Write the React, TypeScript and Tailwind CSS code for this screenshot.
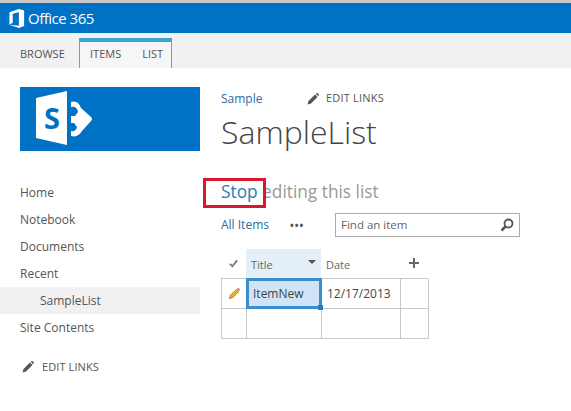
function Pencil({ className }: { className?: string }) {
  return (
    <svg viewBox="0 0 12 12" className={className} fill="currentColor">
      <path d="M0.5 11.5 L1.5 8 L8 1.5 L10.5 4 L4 10.5 Z" />
      <path d="M8.8 0.8 L9.8 0 Q10.2 -0.2 10.6 0.2 L11.8 1.4 Q12.2 1.8 11.8 2.2 L11 3.3 Z" />
    </svg>
  );
}

function SharePointLogo() {
  return (
    <svg viewBox="0 0 56 56" className="w-[56px] h-[56px]">
      <path d="M0 7 L31 0 L31 54 L0 47 Z" fill="#fff" />
      <path d="M35 11 Q42 9 45 17 L55 26 Q57 28 55 30 L46 40 Q42 47 35 45 L35 40 Q40 41 41 36 L38 32 L35 32 L35 25 L39 25 L42 21 Q41 15 35 16 Z" fill="#fff" />
      <text x="8" y="38" fontSize="29" fontWeight="700" fill="#0072c6" fontFamily="Open Sans, sans-serif">S</text>
    </svg>
  );
}

const navItems = ['Home', 'Notebook', 'Documents', 'Recent'];

export default function App() {
  return (
    <div className="relative w-[571px] h-[411px] overflow-hidden bg-white text-[#444] font-['Open_Sans','Noto_Sans',sans-serif]">
      <div className="h-[3px] bg-[#c9c9c9]" />
      <div className="h-[30px] bg-[#0072c6] flex items-center pl-[9px] gap-[3px] text-white">
        <svg viewBox="0 0 16 20" className="w-[16px] h-[19px]" fill="#fff">
          <path d="M0 3.5 L10 0 L15.5 1.5 L15.5 18 L10 20 L0 16.5 L10 17.5 L10 3.5 L3.5 5 L3.5 14.5 L0 16.5 Z" />
        </svg>
        <span className="text-[15px] tracking-[-0.5px]">Office 365</span>
      </div>
      <div className="h-[35px] bg-[#f1f1f1] flex items-end pl-[10px] text-[11px] text-[#555]">
        <div className="h-[27px] w-[69px] flex items-center pl-[10px]">BROWSE</div>
        <div className="h-[30px] w-[93px] border-x border-[#5fa8c4] border-t-[4px] border-t-[#39a5cb] bg-[#f6f6f6] flex items-center gap-[21px] pl-[10px] pb-[1px]">
          <span>ITEMS</span>
          <span>LIST</span>
        </div>
      </div>
      <div className="flex">
        <div className="w-[200px] shrink-0">
          <div className="ml-[20px] mt-[19px] h-[64px] bg-[#0072c6] flex items-center pl-[16px]">
            <SharePointLogo />
          </div>
          <div className="mt-[28px] text-[12px] text-[#555]">
            {navItems.map((item) => (
              <div key={item} className="h-[27px] flex items-center pl-[20px]">{item}</div>
            ))}
            <div className="h-[27px] flex items-center pl-[40px] bg-[#f1f1f1]">SampleList</div>
            <div className="h-[27px] flex items-center pl-[20px]">Site Contents</div>
          </div>
          <div className="mt-[18px] ml-[22px] flex items-center gap-[8px] text-[11px] tracking-[0.1px] text-[#555]">
            <Pencil className="w-[12px] h-[12px] text-[#555]" />
            <span>EDIT LINKS</span>
          </div>
        </div>
        <div className="flex-1 pl-[21px]">
          <div className="mt-[22px] flex items-center text-[12px] h-[17px]">
            <span className="text-[#2a6ba5] w-[86px]">Sample</span>
            <Pencil className="w-[12px] h-[12px] text-[#555] mr-[7px]" />
            <span className="text-[11px] tracking-[0.2px] text-[#555]">EDIT LINKS</span>
          </div>
          <div className="text-[32px] leading-[44px] font-light text-[#444] mt-[3px]">SampleList</div>
          <div className="mt-[25px] text-[17.3px] leading-[26px] text-[#999]">
            <span className="text-[#2a7ab8]">Stop</span> editing this list
          </div>
          <div className="mt-[7px] flex items-center h-[25px] text-[12px]">
            <span className="text-[#2a6ba5] w-[69px]">All Items</span>
            <span className="text-[#555] font-bold text-[10px] tracking-[1px] w-[45px] leading-none">•••</span>
            <div className="w-[185px] h-[24px] border border-[#ababab] flex items-center justify-between pl-[5px] pr-[5px] text-[11.5px] text-[#666]">
              <span>Find an item</span>
              <svg viewBox="0 0 14 14" className="w-[14px] h-[14px]" fill="none" stroke="#555">
                <circle cx="8.5" cy="5.5" r="4" strokeWidth="1.8" />
                <path d="M5.5 8.5 L1.5 12.5" strokeWidth="2.5" />
              </svg>
            </div>
          </div>
          <div className="mt-[12px] w-[207px] text-[#666]">
            <div className="flex h-[29px] text-[11px]">
              <div className="w-[25px] flex items-center justify-center text-[#666]">
                <svg viewBox="0 0 10 10" className="w-[9px] h-[9px]" fill="none" stroke="#777" strokeWidth="2">
                  <path d="M1 5.5 L3.8 8 L9 1.5" />
                </svg>
              </div>
              <div className="w-[75px] bg-[#e4eff7] flex items-end justify-between pb-[5px] pl-[5px] pr-[5px]">
                <span>Title</span>
                <span className="mb-[9px] w-0 h-0 border-x-[4px] border-x-transparent border-t-[4px] border-t-[#555]" />
              </div>
              <div className="w-[79px] flex items-end pb-[5px] pl-[5px]">Date</div>
              <div className="w-[28px] flex items-center justify-center pb-[1px]">
                <svg viewBox="0 0 10 10" className="w-[10px] h-[10px]" stroke="#666" strokeWidth="2">
                  <path d="M5 0 V10 M0 5 H10" />
                </svg>
              </div>
            </div>
            <div className="grid grid-cols-[25px_75px_79px_28px] grid-rows-[30px_30px] border-t border-l border-[#c8c8c8] text-[12px]">
              <div className="border-r border-b border-[#c8c8c8] flex items-center justify-center">
                <svg viewBox="0 0 12 12" className="w-[11px] h-[11px]">
                  <path d="M0.5 11.5 L1.5 8 L8 1.5 L10.5 4 L4 10.5 Z" fill="#f0b429" stroke="#7a5c10" strokeWidth="0.7" />
                  <path d="M8.8 0.8 L9.8 0 L11.8 1.4 L11 3.3 Z" fill="#c0504d" />
                </svg>
              </div>
              <div className="relative border-r border-b border-[#c8c8c8] flex items-center">
                <div className="absolute -left-[1px] -top-[1px] w-[76px] h-[31px] border-[3px] border-[#3b8fcd] bg-[#cfe4f6] flex items-center pl-[4px] text-[#444]">
                  ItemNew
                  <span className="absolute -right-[4px] -bottom-[4px] w-[5px] h-[5px] bg-[#2a7ab8]" />
                </div>
              </div>
              <div className="border-r border-b border-[#c8c8c8] flex items-center pl-[5px] text-[#444]">12/17/2013</div>
              <div className="border-r border-b border-[#c8c8c8]" />
              <div className="border-r border-b border-[#c8c8c8]" />
              <div className="border-r border-b border-[#c8c8c8]" />
              <div className="border-r border-b border-[#c8c8c8]" />
              <div className="border-r border-b border-[#c8c8c8]" />
            </div>
          </div>
        </div>
      </div>
      {/* red highlight drawn over the heading */}
      <div className="absolute left-[203px] top-[178px] w-[63px] h-[30px] border-[3px] border-[#d9182d]" />
    </div>
  );
}
